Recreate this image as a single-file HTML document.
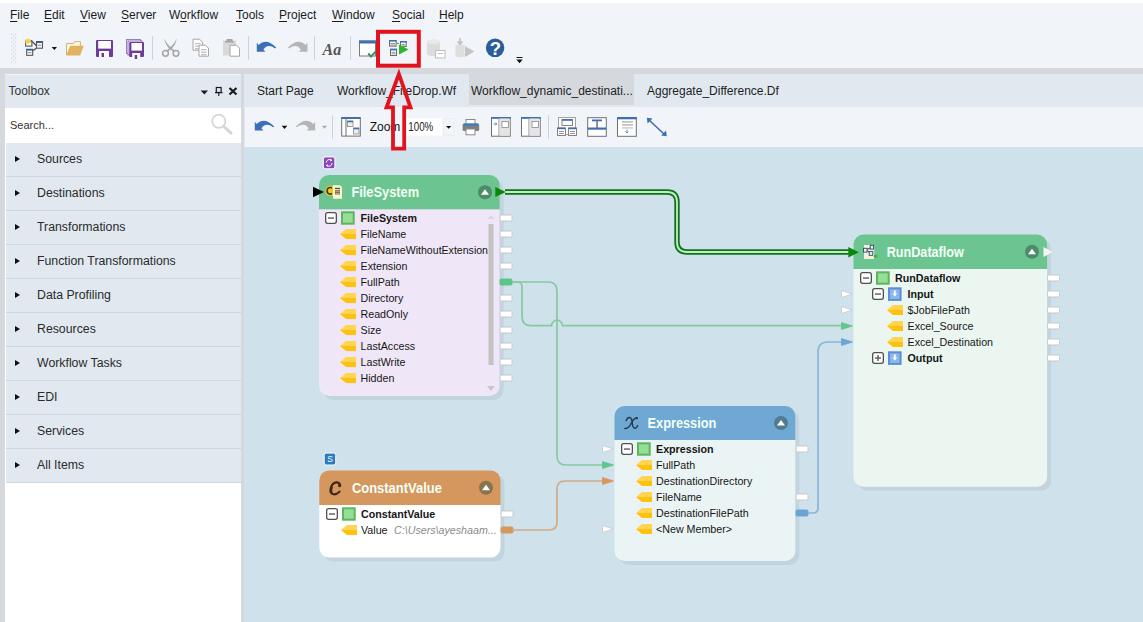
<!DOCTYPE html>
<html><head><meta charset="utf-8">
<style>
*{margin:0;padding:0;box-sizing:border-box}
html,body{width:1143px;height:622px;overflow:hidden;background:#f1f5f9;font-family:"Liberation Sans",sans-serif;position:relative}
.a{position:absolute}
.menu{top:0;left:0;width:1143px;height:30px;background:#f1f5f9;border-top:3px solid #ffffff}
.mi{position:absolute;top:5px;font-size:12px;color:#1b1b1b;white-space:nowrap}
.mi u{text-decoration:underline;text-underline-offset:1.5px;text-decoration-thickness:1px}
.sep{position:absolute;width:1px;background:#cdd3da}
#gsep{top:68px;left:0;width:1143px;height:6px;background:#d5d9de}
#lb{top:68px;left:0;width:5px;height:554px;background:#d5d9de}
#panel{top:75px;left:5px;width:236px;height:547px;background:#fff}
#rb{top:68px;left:241px;width:3px;height:554px;background:#d5d9de}
.ph{position:absolute;top:0;left:0;width:236px;height:33px;background:#e1e8f0}
.search{position:absolute;top:33px;left:0;width:236px;height:35px;background:#fff}
.ti{position:absolute;left:1px;width:235px;height:34px;background:#e1e8f0;border-bottom:1px solid #cfd6de;font-size:12.3px;color:#2b2b2b}
.ti span{position:absolute;left:31px;top:9px}
.ti i{position:absolute;left:8.8px;top:13px;width:0;height:0;border-left:5.5px solid #111;border-top:3.5px solid transparent;border-bottom:3.5px solid transparent}
#tabs{top:74px;left:244px;width:899px;height:33px;background:#e1e8f0}
.tab{position:absolute;top:10px;font-size:12px;color:#1e1e1e;white-space:nowrap}
#ctb{top:107px;left:244px;width:899px;height:40px;background:#f1f5f9;border-left:1px solid #e1e8f0}
#canvas{top:147px;left:244px;width:899px;height:475px;background:#cfe2eb;overflow:hidden}
</style></head><body>
<div class="a menu">
  <span class="mi" style="left:10px"><u>F</u>ile</span>
  <span class="mi" style="left:44px"><u>E</u>dit</span>
  <span class="mi" style="left:80px"><u>V</u>iew</span>
  <span class="mi" style="left:121px"><u>S</u>erver</span>
  <span class="mi" style="left:169px">W<u>o</u>rkflow</span>
  <span class="mi" style="left:236px"><u>T</u>ools</span>
  <span class="mi" style="left:279px"><u>P</u>roject</span>
  <span class="mi" style="left:332px"><u>W</u>indow</span>
  <span class="mi" style="left:392px"><u>S</u>ocial</span>
  <span class="mi" style="left:439px"><u>H</u>elp</span>
</div>
<div class="a" id="gsep"></div>
<div class="a" id="lb"></div>
<div class="a" id="rb"></div>
<div class="a" id="panel">
  <div class="ph"><span style="position:absolute;left:3.5px;top:9px;font-size:12px;color:#333">Toolbox</span></div>
  <div class="search"><span style="position:absolute;left:5px;top:11px;font-size:11px;color:#333">Search...</span></div>
  <div class="ti" style="top:68px"><i></i><span>Sources</span></div>
  <div class="ti" style="top:102px"><i></i><span>Destinations</span></div>
  <div class="ti" style="top:136px"><i></i><span>Transformations</span></div>
  <div class="ti" style="top:170px"><i></i><span>Function Transformations</span></div>
  <div class="ti" style="top:204px"><i></i><span>Data Profiling</span></div>
  <div class="ti" style="top:238px"><i></i><span>Resources</span></div>
  <div class="ti" style="top:272px"><i></i><span>Workflow Tasks</span></div>
  <div class="ti" style="top:306px"><i></i><span>EDI</span></div>
  <div class="ti" style="top:340px"><i></i><span>Services</span></div>
  <div class="ti" style="top:374px"><i></i><span>All Items</span></div>
</div>
<div class="a" id="tabs">
  <span class="tab" style="left:13px">Start Page</span>
  <span class="tab" style="left:93px">Workflow_FileDrop.Wf</span>
  <div style="position:absolute;left:225px;top:-6px;width:165px;height:36.5px;background:#d5d9de"></div>
  <span class="tab" style="left:227px">Workflow_dynamic_destinati...</span>
  <span class="tab" style="left:403px">Aggregate_Difference.Df</span>
</div>
<div class="a" id="ctb"></div>
<div class="a" id="canvas"></div>
<svg class="a" style="left:0;top:0" width="1143" height="622" viewBox="0 0 1143 622" font-family="Liberation Sans, sans-serif"><rect x="11" y="33.5" width="1.2" height="1.2" fill="#cdd3da"/><rect x="15" y="33.5" width="1.2" height="1.2" fill="#cdd3da"/><rect x="13" y="35.5" width="1.2" height="1.2" fill="#cdd3da"/><rect x="11" y="37.5" width="1.2" height="1.2" fill="#cdd3da"/><rect x="15" y="37.5" width="1.2" height="1.2" fill="#cdd3da"/><rect x="13" y="39.5" width="1.2" height="1.2" fill="#cdd3da"/><rect x="11" y="41.5" width="1.2" height="1.2" fill="#cdd3da"/><rect x="15" y="41.5" width="1.2" height="1.2" fill="#cdd3da"/><rect x="13" y="43.5" width="1.2" height="1.2" fill="#cdd3da"/><rect x="11" y="45.5" width="1.2" height="1.2" fill="#cdd3da"/><rect x="15" y="45.5" width="1.2" height="1.2" fill="#cdd3da"/><rect x="13" y="47.5" width="1.2" height="1.2" fill="#cdd3da"/><rect x="11" y="49.5" width="1.2" height="1.2" fill="#cdd3da"/><rect x="15" y="49.5" width="1.2" height="1.2" fill="#cdd3da"/><rect x="13" y="51.5" width="1.2" height="1.2" fill="#cdd3da"/><rect x="11" y="53.5" width="1.2" height="1.2" fill="#cdd3da"/><rect x="15" y="53.5" width="1.2" height="1.2" fill="#cdd3da"/><rect x="13" y="55.5" width="1.2" height="1.2" fill="#cdd3da"/><rect x="11" y="57.5" width="1.2" height="1.2" fill="#cdd3da"/><rect x="15" y="57.5" width="1.2" height="1.2" fill="#cdd3da"/><rect x="13" y="59.5" width="1.2" height="1.2" fill="#cdd3da"/><rect x="11" y="61.5" width="1.2" height="1.2" fill="#cdd3da"/><rect x="15" y="61.5" width="1.2" height="1.2" fill="#cdd3da"/><path d="M31,40.3 L36.3,45.5 M36.3,48.2 L33.3,50.5" stroke="#444" stroke-width="1.1" fill="none"/><rect x="25.6" y="41" width="6.3" height="5.1" fill="#fff" stroke="#555" stroke-width="1.1"/><path d="M28,37.8 L29.2,39.7 L31.2,39.5 L30.3,41.4 L31.2,43.3 L29.2,43.1 L28,44.8 L26.8,43.1 L24.9,43.3 L25.8,41.4 L24.9,39.5 L26.8,39.7 Z" fill="#f5dc60"/><circle cx="28" cy="41.3" r="2.2" fill="#f3d24a"/><rect x="36.5" y="41.6" width="6" height="6.6" fill="#fff" stroke="#555" stroke-width="1.1"/><rect x="36" y="41.1" width="7" height="1.9" fill="#3b5f8e"/><rect x="37.6" y="44.5" width="3.8" height="1.6" fill="#aaa"/><rect x="26.7" y="49.4" width="6" height="5.9" fill="#fff" stroke="#555" stroke-width="1.1"/><rect x="26.2" y="48.9" width="7" height="1.7" fill="#3b5f8e"/><rect x="27.8" y="52.3" width="3.8" height="0.9" fill="#777"/><path d="M51.7,47 H57 L54.35,50 Z" fill="#111"/><path d="M66.6,55 V43.6 H73.5 L74.6,41.7 H80.4 V47" fill="#fffbe6" stroke="#cfae78" stroke-width="1"/><path d="M66.2,55.4 L70.1,45.8 H83.8 L80.1,55.4 Z" fill="#e2b35e"/><rect x="96" y="40" width="17" height="17" rx="1" fill="#6a3d9b"/><rect x="98.2" y="41" width="12.8" height="7.6" fill="#fff"/><rect x="99" y="51" width="10" height="6" fill="#fff"/><rect x="101.5" y="53" width="2.5" height="4" fill="#6a3d9b"/><rect x="126.5" y="39.5" width="14" height="14" fill="#fff" stroke="#9a7cc2" stroke-width="1"/><rect x="128" y="41" width="14" height="14" fill="#fff" stroke="#8a66b5" stroke-width="1"/><rect x="129.2" y="42" width="14.8" height="15" rx="1" fill="#6a3d9b"/><rect x="131.39999999999998" y="43" width="10.6" height="7.6" fill="#fff"/><rect x="132.2" y="53" width="8" height="6" fill="#fff"/><rect x="134.7" y="55" width="2.5" height="4" fill="#6a3d9b"/><rect x="152.0" y="36.3" width="1" height="23.2" fill="#cdd2d8"/><rect x="248.0" y="36.3" width="1" height="23.2" fill="#cdd2d8"/><rect x="314.0" y="36.3" width="1" height="23.2" fill="#cdd2d8"/><rect x="350.0" y="36.3" width="1" height="23.2" fill="#cdd2d8"/><path d="M164.3,38.5 Q166,43 170.3,47 L175,51 L173.6,52 L168.8,48 Q165,44 164.3,38.5 Z" fill="#a6a6a6"/><path d="M176.7,38.5 Q175,43 170.7,47 L166,51 L167.4,52 L172.2,48 Q176,44 176.7,38.5 Z" fill="#a6a6a6"/><circle cx="165.5" cy="53.3" r="2.9" fill="none" stroke="#a6a6a6" stroke-width="1.5"/><circle cx="176" cy="53.3" r="2.9" fill="none" stroke="#a6a6a6" stroke-width="1.5"/><path d="M193,39.2 H199.5 L202.5,42.2 V50.2 H193 Z" fill="#fff" stroke="#a6a6a6" stroke-width="1"/><rect x="195" y="43.2" width="5.5" height="1" fill="#b0b0b0"/><rect x="195" y="45.7" width="5.5" height="1" fill="#b0b0b0"/><rect x="195" y="48.2" width="5.5" height="1" fill="#b0b0b0"/><path d="M199,45.2 H205.5 L208.5,48.2 V56.2 H199 Z" fill="#fff" stroke="#a6a6a6" stroke-width="1"/><rect x="201" y="49.2" width="5.5" height="1" fill="#b0b0b0"/><rect x="201" y="51.7" width="5.5" height="1" fill="#b0b0b0"/><rect x="201" y="54.2" width="5.5" height="1" fill="#b0b0b0"/><rect x="223" y="40.5" width="13" height="15" fill="#d9d9d9"/><rect x="226.5" y="39" width="6" height="3" fill="#a6a6a6"/><rect x="225" y="41" width="9" height="1.6" fill="#a6a6a6"/><path d="M230,45.2 H236.5 L239.5,48.2 V56.2 H230 Z" fill="#fff" stroke="#a6a6a6" stroke-width="1"/><g><path d="M258.6,45.0 Q266.3,37.6 276.2,47.5 L275.2,48.4 Q267.8,43.0 263.40000000000003,49.4 L265.40000000000003,51.7 H256.8 V42.8 Z" fill="#3b6fb6"/></g><g transform="translate(595.4,0) scale(-1,1)"><path d="M289.8,45.0 Q297.5,37.6 307.4,47.5 L306.4,48.4 Q299,43.0 294.6,49.4 L296.6,51.7 H288 V42.8 Z" fill="#b5b5b5"/></g><text x="322.6" y="54.8" font-family="Liberation Serif, serif" font-size="16" font-weight="bold" font-style="italic" fill="#555">Aa</text><rect x="359.5" y="41" width="16" height="15" fill="#fff" stroke="#7a7a7a" stroke-width="1"/><rect x="359" y="40.5" width="17" height="3" fill="#3f6fb0"/><path d="M368.2,53.5 L371,56.6 L376.4,50.8" stroke="#3f8f5f" stroke-width="2" fill="none"/><rect x="378" y="31.8" width="40.8" height="33.9" fill="none" stroke="#e0141e" stroke-width="4"/><rect x="389.5" y="40.5" width="6.6" height="5.6" fill="#fff" stroke="#6a6a6a" stroke-width="1"/><rect x="389" y="40" width="7.6" height="1.6" fill="#3f6fb0"/><rect x="390.5" y="43" width="4.6" height="0.9" fill="#888"/><rect x="390.5" y="44.6" width="4.6" height="0.9" fill="#888"/><rect x="400.5" y="41.5" width="5.7" height="5" fill="#fff" stroke="#6a6a6a" stroke-width="1"/><rect x="400" y="41" width="6.7" height="1.6" fill="#3f6fb0"/><rect x="401.5" y="44" width="3.7" height="0.9" fill="#888"/><rect x="401.5" y="45.6" width="3.7" height="0.9" fill="#888"/><rect x="390.5" y="49.3" width="6" height="6.2" fill="#fff" stroke="#6a6a6a" stroke-width="1"/><rect x="390" y="48.8" width="7" height="1.6" fill="#3f6fb0"/><rect x="391.5" y="51.8" width="4" height="0.9" fill="#888"/><rect x="391.5" y="53.4" width="4" height="0.9" fill="#888"/><path d="M396.6,43 L399,43.6" stroke="#6a6a6a" stroke-width="0.9"/><path d="M399,44.4 L408.6,49.5 L399,54.6 Z" fill="#2db52d"/><path d="M427,41.5 Q433.5,38 440,41.5 V54.5 Q433.5,58 427,54.5 Z" fill="#dcdcdc"/><ellipse cx="433.5" cy="41.5" rx="6.5" ry="2.3" fill="#e9e9e9"/><rect x="435.5" y="50.5" width="9.5" height="7.5" fill="#fff" stroke="#bdbdbd" stroke-width="1"/><rect x="437.5" y="53" width="5.5" height="0.9" fill="#bdbdbd"/><path d="M455.5,45 Q460,43 464.5,45 V56.5 Q460,58 455.5,56.5 Z" fill="#dedede"/><path d="M465,46 L474.3,51.5 L465,57 Z" fill="#c4c4c4"/><path d="M460,38.3 V44 M457.5,41.5 L460,44 L462.5,41.5" stroke="#bbb" stroke-width="1.5" fill="none"/><circle cx="495.1" cy="47.85" r="9.25" fill="#2a5d9a"/><text x="495.3" y="55.1" text-anchor="middle" font-size="18.5" font-weight="bold" fill="#fff">?</text><rect x="516.5" y="57" width="6" height="1" fill="#111"/><path d="M516.4,59.5 H522.7 L519.55,63.3 Z" fill="#111"/><g><path d="M256.6,123.89999999999999 Q264.3,116.5 274.2,126.39999999999999 L273.2,127.3 Q265.8,121.89999999999999 261.40000000000003,128.3 L263.40000000000003,130.6 H254.8 V121.7 Z" fill="#3b6fb6"/></g><path d="M281.7,125.8 H287.3 L284.5,129 Z" fill="#111"/><g transform="translate(611.0,0) scale(-1,1)"><path d="M297.6,123.89999999999999 Q305.3,116.5 315.2,126.39999999999999 L314.2,127.3 Q306.8,121.89999999999999 302.40000000000003,128.3 L304.40000000000003,130.6 H295.8 V121.7 Z" fill="#b5b5b5"/></g><path d="M321.9,125.8 H327 L324.45,128.8 Z" fill="#aaa"/><rect x="332" y="115.4" width="1" height="23.3" fill="#cdd2d8"/><rect x="341.7" y="117.5" width="18.6" height="18.6" fill="#fff" stroke="#6e6e6e" stroke-width="1"/><rect x="341.5" y="117.2" width="19" height="1.8" fill="#3f6fb0"/><rect x="345.5" y="118" width="1" height="18" fill="#6e6e6e"/><rect x="347.5" y="121" width="5.5" height="5.5" fill="#eee" stroke="#888" stroke-width="0.8"/><rect x="347.5" y="120.8" width="5.5" height="1.5" fill="#3f6fb0"/><rect x="353.5" y="128" width="5.5" height="6" fill="#eee" stroke="#888" stroke-width="0.8"/><rect x="353.5" y="127.8" width="5.5" height="1.5" fill="#3f6fb0"/><text x="369.7" y="130.8" font-size="12" fill="#111">Zoom</text><rect x="406" y="118.2" width="49" height="17.4" fill="#fff"/><rect x="443.2" y="118.7" width="11" height="16.4" fill="#f3f6f9" stroke="#e6eaee" stroke-width="1"/><text x="408.3" y="130.8" font-size="12" fill="#222" textLength="25" lengthAdjust="spacingAndGlyphs">100%</text><path d="M446,126 H451.3 L448.65,128.8 Z" fill="#111"/><rect x="466" y="119.5" width="9" height="5" fill="#fff" stroke="#8a8a8a" stroke-width="1"/><rect x="462.6" y="123.5" width="16.6" height="7.5" rx="1.5" fill="#7f7f7f"/><rect x="463.5" y="123.5" width="14.8" height="2.2" fill="#3f7bc0"/><rect x="466" y="129" width="9" height="5.8" fill="#fff" stroke="#8a8a8a" stroke-width="1"/><rect x="491.5" y="117.5" width="18.7" height="18.7" fill="#fff" stroke="#6e6e6e" stroke-width="1"/><rect x="491" y="117" width="19.7" height="1.8" fill="#3f6fb0"/><rect x="498.5" y="118" width="1" height="18" fill="#8a8a8a"/><rect x="499.5" y="118.5" width="10" height="17" fill="#e4e4e4"/><rect x="502" y="121.5" width="6.5" height="6" fill="#fff" stroke="#888" stroke-width="0.8"/><path d="M493.5,124 h3 M495.5,122.8 l1.3,1.2 l-1.3,1.2" stroke="#3f7bc0" stroke-width="0.9" fill="none"/><rect x="521.5" y="117.5" width="18.7" height="18.7" fill="#fff" stroke="#6e6e6e" stroke-width="1"/><rect x="521" y="117" width="19.7" height="1.8" fill="#3f6fb0"/><rect x="528.5" y="118" width="1" height="18" fill="#8a8a8a"/><rect x="529.5" y="118.5" width="10" height="17" fill="#e4e4e4"/><rect x="532" y="121.5" width="6.5" height="6" fill="#fff" stroke="#888" stroke-width="0.8"/><rect x="548" y="115.3" width="1" height="23.3" fill="#cdd2d8"/><rect x="558.5" y="117.5" width="17" height="17" fill="#fff" stroke="#a0a0a0" stroke-width="1"/><rect x="562" y="119.5" width="10.5" height="6" fill="#fff" stroke="#777" stroke-width="0.9"/><rect x="562" y="119.2" width="10.5" height="1.6" fill="#3f6fb0"/><rect x="557.5" y="128" width="8" height="7.5" fill="#fff" stroke="#777" stroke-width="0.9"/><rect x="557.5" y="127.6" width="8" height="1.6" fill="#3f6fb0"/><rect x="568.5" y="128" width="8" height="7.5" fill="#fff" stroke="#777" stroke-width="0.9"/><rect x="568.5" y="127.6" width="8" height="1.6" fill="#3f6fb0"/><rect x="559" y="131" width="5" height="0.9" fill="#888"/><rect x="559" y="133" width="5" height="0.9" fill="#888"/><rect x="570" y="131" width="5" height="0.9" fill="#888"/><rect x="570" y="133" width="5" height="0.9" fill="#888"/><rect x="587.7" y="117.7" width="18.6" height="18.6" fill="#fff" stroke="#6e6e6e" stroke-width="1"/><rect x="592" y="119.5" width="10" height="1.8" fill="#3f6fb0"/><rect x="596.3" y="121" width="1.5" height="7" fill="#6e6e6e"/><rect x="588" y="127.5" width="18" height="2.2" fill="#3f6fb0"/><rect x="617.5" y="117.5" width="18.8" height="18.8" fill="#fff" stroke="#6e6e6e" stroke-width="1"/><rect x="617" y="117" width="19.8" height="2.3" fill="#3f6fb0"/><rect x="622" y="121.5" width="11" height="0.9" fill="#888"/><rect x="622" y="124.5" width="11" height="0.9" fill="#888"/><rect x="622" y="127.5" width="11" height="0.9" fill="#aaa"/><path d="M627,129.5 V133 M625.5,131.5 L627,133 L628.5,131.5" stroke="#3f7bc0" stroke-width="0.8" fill="none"/><path d="M648.5,119.5 L664.5,134.5" stroke="#3f6fb0" stroke-width="1.6"/><path d="M646.8,117.8 L652.5,118.6 L647.6,123.5 Z M666.8,136.2 L661.1,135.4 L666,130.5 Z" fill="#3f6fb0"/><path d="M200.7,90.6 H208 L204.35,94.6 Z" fill="#1a1a1a"/><rect x="216.3" y="87.5" width="4.8" height="5" fill="none" stroke="#1a1a1a" stroke-width="1.2"/><rect x="215" y="92" width="7.5" height="1.2" fill="#1a1a1a"/><rect x="218.2" y="93" width="1.1" height="3" fill="#1a1a1a"/><path d="M229.5,88 L236.5,94.5 M236.5,88 L229.5,94.5" stroke="#1a1a1a" stroke-width="2.2"/><circle cx="218.8" cy="121.3" r="6.6" fill="none" stroke="#d6d6d6" stroke-width="1.8"/><path d="M223.8,126.5 L231,133.2" stroke="#d6d6d6" stroke-width="3" stroke-linecap="round"/><path d="M505,192 H667 Q677,192 677,202 V242 Q677,252 687,252 H849" fill="none" stroke="#176e22" stroke-width="5.4"/><path d="M505,192 H667 Q677,192 677,202 V242 Q677,252 687,252 H849" fill="none" stroke="#b6f5b6" stroke-width="1.8"/><rect x="323" y="179" width="180.6" height="221" rx="10" fill="#c2d5de"/><path d="M319,185 a10,10 0 0 1 10,-10 H489.6 a10,10 0 0 1 10,10 V209.5 H319 Z" fill="#6cc591"/><path d="M319,209.5 H499.6 V386 a10,10 0 0 1 -10,10 H329 a10,10 0 0 1 -10,-10 Z" fill="#efe7f7"/><text x="351.4" y="197.15" font-size="14" font-weight="bold" fill="#f2fff6" textLength="67.8" lengthAdjust="spacingAndGlyphs">FileSystem</text><circle cx="485" cy="192.25" r="7" fill="rgba(40,70,60,0.45)"/><path d="M481,194.75 L485,189.25 L489,194.75 Z" fill="#fff"/><rect x="488.5" y="224" width="5" height="141" fill="#c3c3c3"/><path d="M487.5,219 L491,215 L494.5,219 Z" fill="#d9d6dc"/><path d="M487,386 L491,391 L495,386 Z" fill="#c9c6cc"/><rect x="325.65" y="212.65" width="10.7" height="10.7" rx="2" fill="#fff" stroke="#505050" stroke-width="1.3"/><rect x="328" y="217.4" width="6" height="1.3" fill="#505050"/><rect x="342" y="212.3" width="11.7" height="11.4" fill="#95de95" stroke="#5db65d" stroke-width="2"/><text x="360.5" y="222" font-size="10.7" font-weight="bold" fill="#161616">FileSystem</text><rect x="500.0" y="215" width="12" height="6" rx="1.2" fill="#fff" stroke="#c9c9c9" stroke-width="1"/><path d="M340,234 L346,229 H356 V234 Z" fill="#ffd451"/><path d="M340,234 L346,239 H356 V234 Z" fill="#fdc10e"/><text x="360.5" y="238" font-size="10.7" fill="#161616">FileName</text><rect x="500.0" y="231" width="12" height="6" rx="1.2" fill="#fff" stroke="#c9c9c9" stroke-width="1"/><path d="M340,250 L346,245 H356 V250 Z" fill="#ffd451"/><path d="M340,250 L346,255 H356 V250 Z" fill="#fdc10e"/><text x="360.5" y="254" font-size="10.7" fill="#161616" textLength="127.5" lengthAdjust="spacingAndGlyphs">FileNameWithoutExtension</text><rect x="500.0" y="247" width="12" height="6" rx="1.2" fill="#fff" stroke="#c9c9c9" stroke-width="1"/><path d="M340,266 L346,261 H356 V266 Z" fill="#ffd451"/><path d="M340,266 L346,271 H356 V266 Z" fill="#fdc10e"/><text x="360.5" y="270" font-size="10.7" fill="#161616">Extension</text><rect x="500.0" y="263" width="12" height="6" rx="1.2" fill="#fff" stroke="#c9c9c9" stroke-width="1"/><path d="M340,282 L346,277 H356 V282 Z" fill="#ffd451"/><path d="M340,282 L346,287 H356 V282 Z" fill="#fdc10e"/><text x="360.5" y="286" font-size="10.7" fill="#161616">FullPath</text><rect x="500.0" y="279" width="12" height="6" rx="1.2" fill="#5dc48a" stroke="#5dc48a" stroke-width="1"/><path d="M340,298 L346,293 H356 V298 Z" fill="#ffd451"/><path d="M340,298 L346,303 H356 V298 Z" fill="#fdc10e"/><text x="360.5" y="302" font-size="10.7" fill="#161616">Directory</text><rect x="500.0" y="295" width="12" height="6" rx="1.2" fill="#fff" stroke="#c9c9c9" stroke-width="1"/><path d="M340,314 L346,309 H356 V314 Z" fill="#ffd451"/><path d="M340,314 L346,319 H356 V314 Z" fill="#fdc10e"/><text x="360.5" y="318" font-size="10.7" fill="#161616">ReadOnly</text><rect x="500.0" y="311" width="12" height="6" rx="1.2" fill="#fff" stroke="#c9c9c9" stroke-width="1"/><path d="M340,330 L346,325 H356 V330 Z" fill="#ffd451"/><path d="M340,330 L346,335 H356 V330 Z" fill="#fdc10e"/><text x="360.5" y="334" font-size="10.7" fill="#161616">Size</text><rect x="500.0" y="327" width="12" height="6" rx="1.2" fill="#fff" stroke="#c9c9c9" stroke-width="1"/><path d="M340,346 L346,341 H356 V346 Z" fill="#ffd451"/><path d="M340,346 L346,351 H356 V346 Z" fill="#fdc10e"/><text x="360.5" y="350" font-size="10.7" fill="#161616">LastAccess</text><rect x="500.0" y="343" width="12" height="6" rx="1.2" fill="#fff" stroke="#c9c9c9" stroke-width="1"/><path d="M340,362 L346,357 H356 V362 Z" fill="#ffd451"/><path d="M340,362 L346,367 H356 V362 Z" fill="#fdc10e"/><text x="360.5" y="366" font-size="10.7" fill="#161616">LastWrite</text><rect x="500.0" y="359" width="12" height="6" rx="1.2" fill="#fff" stroke="#c9c9c9" stroke-width="1"/><path d="M340,378 L346,373 H356 V378 Z" fill="#ffd451"/><path d="M340,378 L346,383 H356 V378 Z" fill="#fdc10e"/><text x="360.5" y="382" font-size="10.7" fill="#161616">Hidden</text><rect x="500.0" y="375" width="12" height="6" rx="1.2" fill="#fff" stroke="#c9c9c9" stroke-width="1"/><rect x="857.5" y="238.5" width="193.6" height="252.3" rx="10" fill="#c2d5de"/><path d="M853.5,244.5 a10,10 0 0 1 10,-10 H1037.1 a10,10 0 0 1 10,10 V269.0 H853.5 Z" fill="#6cc591"/><path d="M853.5,269.0 H1047.1 V476.8 a10,10 0 0 1 -10,10 H863.5 a10,10 0 0 1 -10,-10 Z" fill="#ebf6f1"/><text x="886.7" y="256.65" font-size="14" font-weight="bold" fill="#f2fff6" textLength="77.2" lengthAdjust="spacingAndGlyphs">RunDataflow</text><circle cx="1032" cy="251.75" r="7" fill="rgba(40,70,60,0.45)"/><path d="M1028,254.25 L1032,248.75 L1036,254.25 Z" fill="#fff"/><rect x="860.65" y="272.65" width="10.7" height="10.7" rx="2" fill="#fff" stroke="#505050" stroke-width="1.3"/><rect x="863" y="277.4" width="6" height="1.3" fill="#505050"/><rect x="877" y="272.3" width="11.7" height="11.4" fill="#95de95" stroke="#5db65d" stroke-width="2"/><text x="895" y="282" font-size="10.7" font-weight="bold" fill="#161616">RunDataflow</text><rect x="872.65" y="288.65" width="10.7" height="10.7" rx="2" fill="#fff" stroke="#505050" stroke-width="1.3"/><rect x="875" y="293.4" width="6" height="1.3" fill="#505050"/><rect x="889" y="288.3" width="11.6" height="11.6" fill="#8db5ea" stroke="#5b8fd1" stroke-width="2"/><path d="M892.3,293.5 h5 l-2.5,3 z M893.9,290.5 h1.8 v3.3 h-1.8z" fill="#fff"/><text x="907.5" y="298" font-size="10.7" font-weight="bold" fill="#161616">Input</text><path d="M887,310 L893,305 H903 V310 Z" fill="#ffd451"/><path d="M887,310 L893,315 H903 V310 Z" fill="#fdc10e"/><text x="907.5" y="314" font-size="10.7" fill="#161616">$JobFilePath</text><path d="M887,326 L893,321 H903 V326 Z" fill="#ffd451"/><path d="M887,326 L893,331 H903 V326 Z" fill="#fdc10e"/><text x="907.5" y="330" font-size="10.7" fill="#161616">Excel_Source</text><path d="M887,342 L893,337 H903 V342 Z" fill="#ffd451"/><path d="M887,342 L893,347 H903 V342 Z" fill="#fdc10e"/><text x="907.5" y="346" font-size="10.7" fill="#161616">Excel_Destination</text><rect x="872.65" y="352.65" width="10.7" height="10.7" rx="2" fill="#fff" stroke="#505050" stroke-width="1.3"/><rect x="875" y="357.4" width="6" height="1.3" fill="#505050"/><rect x="877.35" y="355" width="1.3" height="6" fill="#505050"/><rect x="889" y="352.3" width="11.6" height="11.6" fill="#8db5ea" stroke="#5b8fd1" stroke-width="2"/><path d="M892.3,357.5 h5 l-2.5,3 z M893.9,354.5 h1.8 v3.3 h-1.8z" fill="#fff"/><text x="907.5" y="362" font-size="10.7" font-weight="bold" fill="#161616">Output</text><rect x="1047.5" y="275" width="12" height="6" rx="1.2" fill="#fff" stroke="#c9c9c9" stroke-width="1"/><rect x="1047.5" y="291" width="12" height="6" rx="1.2" fill="#fff" stroke="#c9c9c9" stroke-width="1"/><rect x="1047.5" y="307" width="12" height="6" rx="1.2" fill="#fff" stroke="#c9c9c9" stroke-width="1"/><rect x="1047.5" y="323" width="12" height="6" rx="1.2" fill="#fff" stroke="#c9c9c9" stroke-width="1"/><rect x="1047.5" y="339" width="12" height="6" rx="1.2" fill="#fff" stroke="#c9c9c9" stroke-width="1"/><rect x="1047.5" y="355" width="12" height="6" rx="1.2" fill="#fff" stroke="#c9c9c9" stroke-width="1"/><rect x="618.5" y="410" width="180.8" height="155" rx="10" fill="#c2d5de"/><path d="M614.5,416 a10,10 0 0 1 10,-10 H785.3 a10,10 0 0 1 10,10 V440 H614.5 Z" fill="#6fa8d3"/><path d="M614.5,440 H795.3 V551 a10,10 0 0 1 -10,10 H624.5 a10,10 0 0 1 -10,-10 Z" fill="#ebf4f4"/><text x="647.5" y="427.9" font-size="14" font-weight="bold" fill="#f2fff6" textLength="68.9" lengthAdjust="spacingAndGlyphs">Expression</text><circle cx="781" cy="423.0" r="7" fill="rgba(40,70,60,0.45)"/><path d="M777,425.5 L781,420.0 L785,425.5 Z" fill="#fff"/><rect x="621.65" y="443.65" width="10.7" height="10.7" rx="2" fill="#fff" stroke="#505050" stroke-width="1.3"/><rect x="624" y="448.4" width="6" height="1.3" fill="#505050"/><rect x="638" y="443.3" width="11.7" height="11.4" fill="#95de95" stroke="#5db65d" stroke-width="2"/><text x="656" y="453" font-size="10.7" font-weight="bold" fill="#161616">Expression</text><path d="M636,465 L642,460 H652 V465 Z" fill="#ffd451"/><path d="M636,465 L642,470 H652 V465 Z" fill="#fdc10e"/><text x="656" y="469" font-size="10.7" fill="#161616">FullPath</text><path d="M636,481 L642,476 H652 V481 Z" fill="#ffd451"/><path d="M636,481 L642,486 H652 V481 Z" fill="#fdc10e"/><text x="656" y="485" font-size="10.7" fill="#161616">DestinationDirectory</text><path d="M636,497 L642,492 H652 V497 Z" fill="#ffd451"/><path d="M636,497 L642,502 H652 V497 Z" fill="#fdc10e"/><text x="656" y="501" font-size="10.7" fill="#161616">FileName</text><path d="M636,513 L642,508 H652 V513 Z" fill="#ffd451"/><path d="M636,513 L642,518 H652 V513 Z" fill="#fdc10e"/><text x="656" y="517" font-size="10.7" fill="#161616">DestinationFilePath</text><path d="M636,529 L642,524 H652 V529 Z" fill="#ffd451"/><path d="M636,529 L642,534 H652 V529 Z" fill="#fdc10e"/><text x="656" y="533" font-size="10.7" fill="#161616">&lt;New Member&gt;</text><rect x="796.0" y="446" width="12" height="6" rx="1.2" fill="#fff" stroke="#c9c9c9" stroke-width="1"/><rect x="796.0" y="494" width="12" height="6" rx="1.2" fill="#fff" stroke="#c9c9c9" stroke-width="1"/><rect x="796.0" y="510" width="12" height="6" rx="1.2" fill="#6aa5d3" stroke="#6aa5d3" stroke-width="1"/><rect x="323.3" y="474.4" width="181.2" height="87.2" rx="10" fill="#c2d5de"/><path d="M319.3,480.4 a10,10 0 0 1 10,-10 H490.5 a10,10 0 0 1 10,10 V505.0 H319.3 Z" fill="#d6975f"/><path d="M319.3,505.0 H500.5 V547.6 a10,10 0 0 1 -10,10 H329.3 a10,10 0 0 1 -10,-10 Z" fill="#ffffff"/><text x="351.9" y="492.59999999999997" font-size="14" font-weight="bold" fill="#f2fff6" textLength="90" lengthAdjust="spacingAndGlyphs">ConstantValue</text><circle cx="486" cy="487.7" r="7" fill="rgba(40,70,60,0.45)"/><path d="M482,490.2 L486,484.7 L490,490.2 Z" fill="#fff"/><rect x="326.65" y="508.65" width="10.7" height="10.7" rx="2" fill="#fff" stroke="#505050" stroke-width="1.3"/><rect x="329" y="513.4" width="6" height="1.3" fill="#505050"/><rect x="343" y="508.3" width="11.7" height="11.4" fill="#95de95" stroke="#5db65d" stroke-width="2"/><text x="361" y="518" font-size="10.7" font-weight="bold" fill="#161616">ConstantValue</text><path d="M341,530 L347,525 H357 V530 Z" fill="#ffd451"/><path d="M341,530 L347,535 H357 V530 Z" fill="#fdc10e"/><text x="361" y="534" font-size="10.7" fill="#161616">Value</text><text x="394" y="534" font-size="10.7" font-style="italic" fill="#8a8a8a">C:\Users\ayeshaam...</text><rect x="501.0" y="511" width="12" height="6" rx="1.2" fill="#fff" stroke="#c9c9c9" stroke-width="1"/><rect x="501.0" y="527" width="12" height="6" rx="1.2" fill="#d6975f" stroke="#d6975f" stroke-width="1"/><path d="M512,282 H548 Q557,282 557,291 V456 Q557,465 566,465 H604" fill="none" stroke="#86c9a0" stroke-width="1.7"/><path d="M512,282 H517 Q522,282 522,287 V316 Q522,325.7 531,325.7 H551.5 A5.5,5.5 0 0 1 562.5,325.7 H843" fill="none" stroke="#86c9a0" stroke-width="1.7"/><path d="M808,513 H813 Q818,513 818,508 V352 Q818,342 828,342 H843" fill="none" stroke="#8ab5d6" stroke-width="1.7"/><path d="M512,530 H549 Q557,530 557,522 V489 Q557,481 565,481 H604" fill="none" stroke="#d2aa88" stroke-width="1.7"/><path d="M841.5,290.5 L852.5,294 L841.5,297.5 Z" fill="#fff" stroke="#c8c8c8" stroke-width="0.8"/><path d="M841.5,306.5 L852.5,310 L841.5,313.5 Z" fill="#fff" stroke="#c8c8c8" stroke-width="0.8"/><path d="M841.5,322.5 L852.5,326 L841.5,329.5 Z" fill="#62c58b" stroke="#62c58b" stroke-width="0.8"/><path d="M841.5,338.5 L852.5,342 L841.5,345.5 Z" fill="#6aa5d3" stroke="#6aa5d3" stroke-width="0.8"/><path d="M602.5,445.5 L613.5,449 L602.5,452.5 Z" fill="#fff" stroke="#c8c8c8" stroke-width="0.8"/><path d="M602.5,461.5 L613.5,465 L602.5,468.5 Z" fill="#62c58b" stroke="#62c58b" stroke-width="0.8"/><path d="M602.5,477.5 L613.5,481 L602.5,484.5 Z" fill="#d9955a" stroke="#d9955a" stroke-width="0.8"/><path d="M602.5,525.5 L613.5,529 L602.5,532.5 Z" fill="#fff" stroke="#c8c8c8" stroke-width="0.8"/><path d="M495.3,187 L505.8,192 L495.3,197.1 Z" fill="#0b850b"/><path d="M848.3,246.9 L858.9,252.2 L848.3,257.5 Z" fill="#0b850b"/><path d="M313,186.7 L324,192 L313,197.3 Z" fill="#000"/><path d="M1043.5,247 L1052.5,252 L1043.5,257 Z" fill="#f4f4f4"/><circle cx="330.4" cy="190.8" r="5.2" fill="#f3c81c"/><circle cx="330.4" cy="190.8" r="3.3" fill="none" stroke="#3b3a2a" stroke-width="1.6"/><rect x="332" y="186" width="4" height="10" fill="#f3c81c"/><path d="M333,185.2 H340 L342,187.2 V198.7 H333 Z" fill="#fdf8cf"/><rect x="335" y="187.8" width="5" height="1.4" fill="#5a5040"/><rect x="335" y="190.2" width="5" height="4.3" fill="#7a6a55"/><rect x="335.5" y="191.3" width="4" height="0.8" fill="#c8b890"/><rect x="335.5" y="193" width="4" height="0.8" fill="#c8b890"/><rect x="864" y="245" width="10.2" height="14" fill="#f6efd9"/><path d="M866,250 L871,247.5 M866,250 L871,253.5" stroke="#333" stroke-width="1"/><rect x="863.5" y="248.3" width="3.6" height="3.8" fill="#e8f0f8" stroke="#2b4a6a" stroke-width="0.9"/><rect x="870.2" y="245.3" width="3.4" height="3.8" fill="#e8f0f8" stroke="#2b4a6a" stroke-width="0.9"/><rect x="869.2" y="251.6" width="3.6" height="3.7" fill="#e8f0f8" stroke="#2b4a6a" stroke-width="0.9"/><circle cx="875.5" cy="256.2" r="1.7" fill="#3cb72e"/><path d="M626.2,420.5 Q627.5,417.2 630,417.6 Q632,418.2 632.2,422.5 Q632.5,427.8 635,428.3 Q636.6,428.4 637.6,425.6" fill="none" stroke="#243a4c" stroke-width="1.5" stroke-linecap="round"/><path d="M637.2,417.8 Q633.5,418.4 631.4,423 Q628.8,428.6 624.6,428.6" fill="none" stroke="#243a4c" stroke-width="1.4" stroke-linecap="round"/><circle cx="636.8" cy="418.2" r="1.1" fill="#243a4c"/><path d="M340.2,485.2 Q339.5,482.3 336.5,482.4 Q332,482.8 330.6,488.5 Q329.6,493.6 333.6,494.3 Q336.8,494.6 339.6,491.6" fill="none" stroke="#3b2a1c" stroke-width="2.1" stroke-linecap="round"/><circle cx="339.6" cy="485.6" r="1.6" fill="#3b2a1c"/><path d="M332.2,486.5 Q330.8,490.5 331.8,493.2" fill="none" stroke="#3b2a1c" stroke-width="1.6"/><rect x="323.3" y="156.9" width="11.6" height="11.9" rx="2.2" fill="#8a47b8" stroke="#fff" stroke-width="1"/><rect x="324.2" y="453.1" width="11.5" height="11.9" rx="2.2" fill="#2b7bbd" stroke="#f4fbff" stroke-width="1"/><text x="327.2" y="462.2" font-size="8.5" fill="#fff">S</text><path d="M326.3,162.6 A3,3 0 0 1 331.2,160.2" fill="none" stroke="#fff" stroke-width="1"/><path d="M332.0,163.1 A3,3 0 0 1 327.1,165.5" fill="none" stroke="#fff" stroke-width="1"/><path d="M330.6,158.6 L332.4,160.4 L330.2,161.4 Z M327.7,164.3 L325.9,165.3 L327.8,167.0 Z" fill="#fff"/><path d="M398.9,74 L410.5,107.4 H404.2 V148.7 H393 V107.4 H386.5 Z" fill="none" stroke="#e0141e" stroke-width="3.8" stroke-linejoin="miter"/></svg>
</body></html>
